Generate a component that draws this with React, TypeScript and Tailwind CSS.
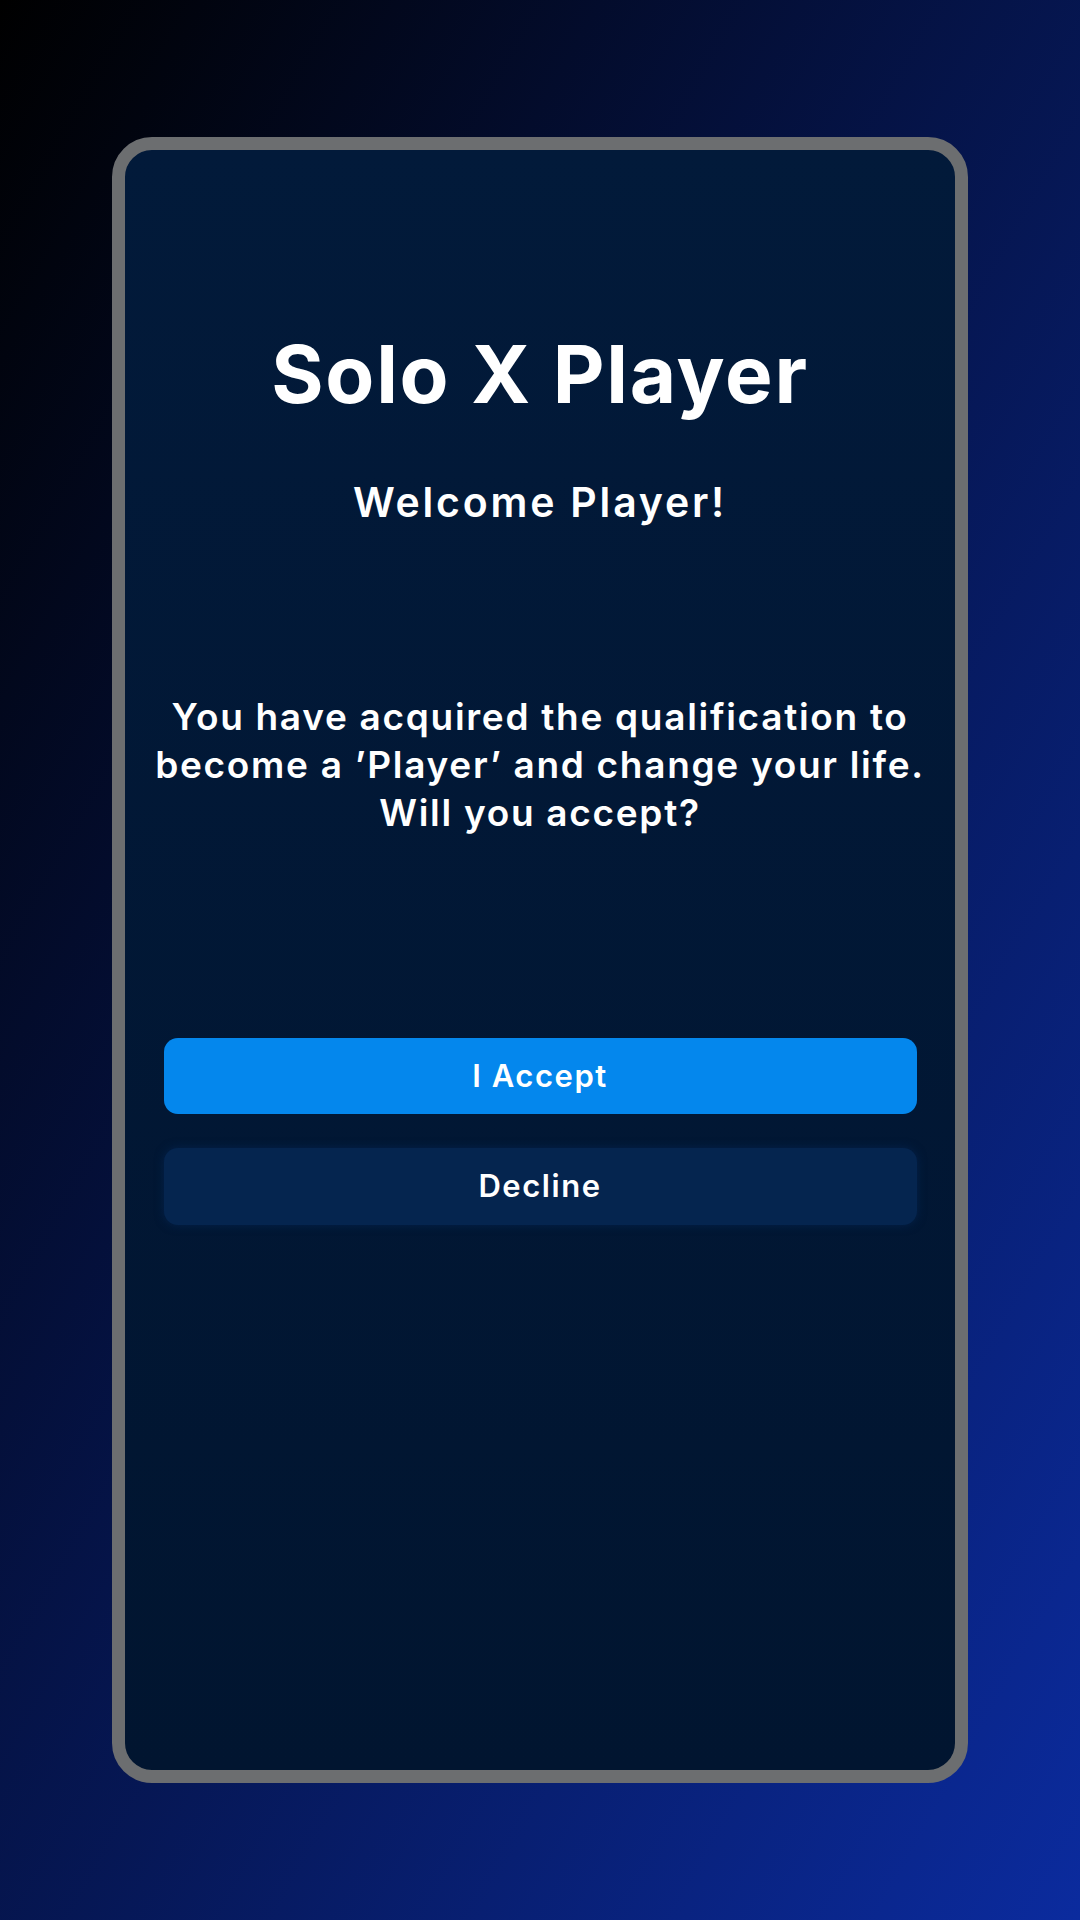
export default function App() {
  return (
    <div
      className="w-[1080px] h-[1920px] flex items-center justify-center bg-[linear-gradient(to_bottom_right,#000000,#0b2b9e)]"
      style={{ fontFamily: 'Inter, "Noto Sans", sans-serif' }}
    >
      {/* Phone frame */}
      <div className="w-[856px] h-[1646px] rounded-[40px] border-[13px] border-[#6c6e70] bg-[linear-gradient(to_bottom,#021a3a,#011530)] flex flex-col items-center pt-[184px] px-[25px]">
        <h1 className="text-[80px] leading-none font-bold text-white tracking-[0.022em]">Solo X Player</h1>
        <h2 className="mt-[68px] text-[41px] leading-none font-semibold text-white tracking-[0.068em]">
          Welcome Player!
        </h2>

        <p className="mt-[170px] text-[37px] leading-[48px] font-semibold text-white text-center tracking-[0.046em]">
          You have acquired the qualification to
          <br />
          become a ’Player’ and change your life.
          <br />
          Will you accept?
        </p>

        <div className="mt-[201px] w-[753px] flex flex-col gap-[34px]">
          <button className="h-[76px] w-full rounded-[14px] bg-[#0487ed] text-white text-[31px] font-semibold tracking-[0.05em]">
            I Accept
          </button>
          <button className="h-[77px] w-full rounded-[14px] bg-[#05254f] text-white text-[31px] font-semibold tracking-[0.05em] shadow-[0_0_10px_rgba(6,38,84,0.7)]">
            Decline
          </button>
        </div>
      </div>
    </div>
  );
}
